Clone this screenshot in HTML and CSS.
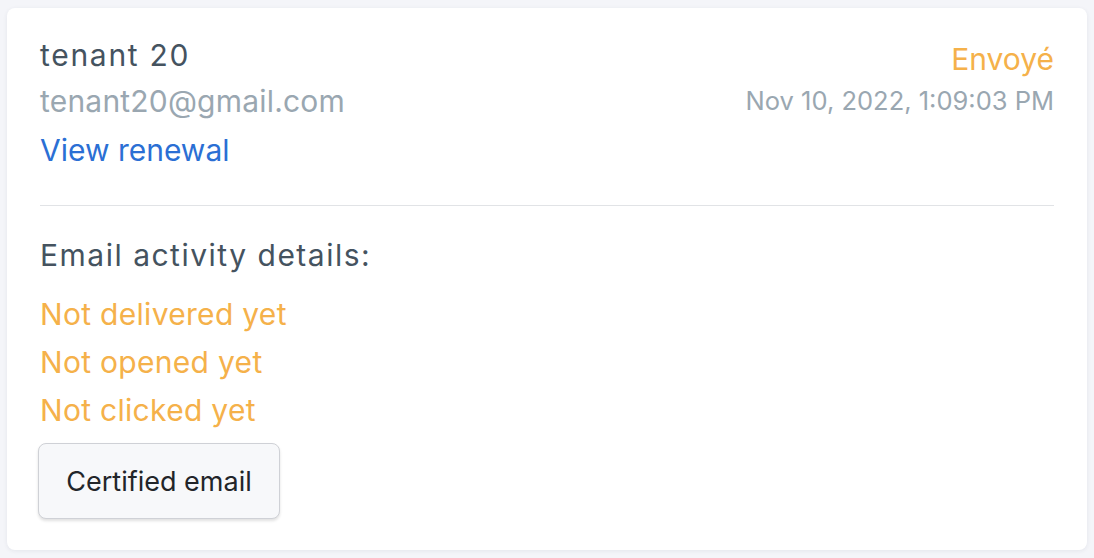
FILE: index.html
```html
<!DOCTYPE html>
<html>
<head>
<meta charset="utf-8">
<link rel="stylesheet" href="styles.css">
</head>
<body>
<div class="card">
  <div class="top">
    <div class="who">
      <div class="name">tenant 20</div>
      <div class="email">tenant20@gmail.com</div>
      <a class="link" href="#">View renewal</a>
    </div>
    <div class="status">
      <div class="state">Envoyé</div>
      <div class="date">Nov 10, 2022, 1:09:03 PM</div>
    </div>
  </div>
  <div class="divider"></div>
  <div class="details">
    <div class="title">Email activity details:</div>
    <div class="events">
      <div class="event">Not delivered yet</div>
      <div class="event">Not opened yet</div>
      <div class="event">Not clicked yet</div>
    </div>
    <button class="btn">Certified email</button>
  </div>
</div>
</body>
</html>
```
FILE: styles.css
```css
html, body {
  margin: 0;
  padding: 0;
  background: #f4f5f9;
  font-family: Inter, "Noto Sans", sans-serif;
}
body {
  padding: 8px 7px;
}
.card {
  background: #ffffff;
  border-radius: 8px;
  box-shadow: 0 1px 4px rgba(40, 50, 80, 0.08);
  padding: 24px 33px 31px 33px;
  height: 542px;
  box-sizing: border-box;
}
.top {
  display: flex;
  justify-content: space-between;
  align-items: flex-start;
}
.who {
  display: flex;
  flex-direction: column;
  align-items: flex-start;
}
.name {
  font-size: 30px;
  line-height: 46px;
  letter-spacing: 1.7px;
  color: #45535f;
}
.email {
  font-size: 30px;
  line-height: 46px;
  letter-spacing: 0.2px;
  color: #9aa7b1;
}
.link {
  margin-top: 3px;
  font-size: 30px;
  line-height: 46px;
  color: #2b6fd4;
  text-decoration: none;
}
.status {
  padding-top: 4px;
  display: flex;
  flex-direction: column;
  align-items: flex-end;
}
.state {
  font-size: 30px;
  line-height: 46px;
  color: #f5b14a;
}
.date {
  margin-top: 2px;
  font-size: 25.5px;
  line-height: 34px;
  color: #9aa7b1;
}
.divider {
  height: 1px;
  background: #e1e3e6;
  margin: 32px 0 26px 0;
}
.details {
  display: flex;
  flex-direction: column;
  align-items: flex-start;
}
.title {
  font-size: 30px;
  line-height: 46px;
  letter-spacing: 1.5px;
  color: #45535f;
}
.events {
  margin-top: 12px;
}
.event {
  font-size: 30px;
  line-height: 48px;
  letter-spacing: 0.3px;
  color: #f5b14a;
}
.btn {
  margin-top: 9px;
  margin-left: -2px;
  width: 242px;
  height: 76px;
  background: #f7f8fa;
  border: 1px solid #cfd1d6;
  border-radius: 8px;
  box-shadow: 0 2px 3px rgba(0, 0, 0, 0.12);
  font-family: Inter, "Noto Sans", sans-serif;
  font-size: 27px;
  color: #222529;
}
```
